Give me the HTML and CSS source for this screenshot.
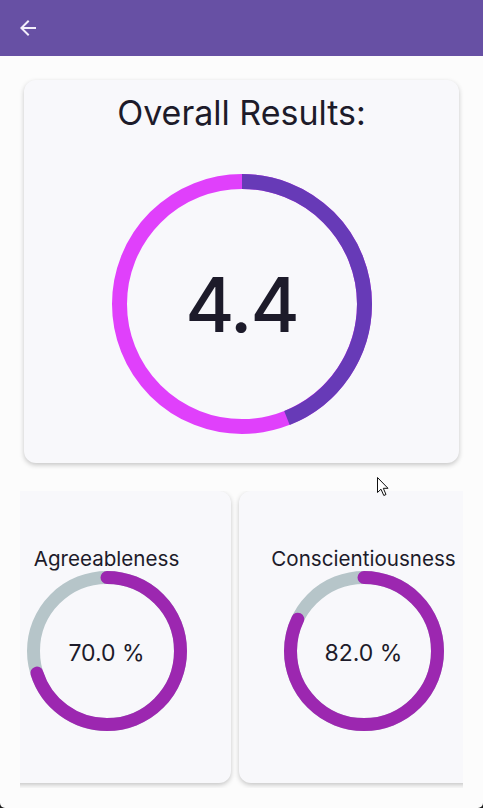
FILE: index.html
```html
<!DOCTYPE html>
<html lang="en">
<head>
<meta charset="utf-8">
<title>Results</title>
<link rel="stylesheet" href="styles.css">
</head>
<body>
<div class="screen">
  <header class="appbar">
    <button class="back" aria-label="Back">
      <svg viewBox="0 0 24 24" width="24" height="24"><path d="M20 11H7.83l5.59-5.59L12 4l-8 8 8 8 1.41-1.41L7.83 13H20v-2z" fill="#f3eefb"/></svg>
    </button>
  </header>
  <main class="content">
    <section class="overall card">
      <h1 class="overall-title">Overall Results:</h1>
      <div class="big-ring">
        <svg viewBox="0 0 260 260" width="260" height="260">
          <circle cx="130" cy="130" r="122.5" fill="none" stroke="#e040fb" stroke-width="15"/>
          <circle cx="130" cy="130" r="122.5" fill="none" stroke="#673ab7" stroke-width="15" stroke-dasharray="338.7 1000" transform="rotate(-90 130 130)"/>
        </svg>
        <span class="big-value">4.4</span>
      </div>
    </section>
    <div class="traits">
      <div class="traits-track">
        <article class="trait card">
          <h2 class="trait-name">Agreeableness</h2>
          <div class="small-ring">
            <svg viewBox="0 0 160 160" width="160" height="160">
              <circle cx="80" cy="80" r="73.5" fill="none" stroke="#b6c5c9" stroke-width="13"/>
              <circle cx="80" cy="80" r="73.5" fill="none" stroke="#9c27b0" stroke-width="13" stroke-linecap="round" stroke-dasharray="323.3 1000" transform="rotate(-90 80 80)"/>
            </svg>
            <span class="small-value">70.0 %</span>
          </div>
        </article>
        <article class="trait card">
          <h2 class="trait-name">Conscientiousness</h2>
          <div class="small-ring">
            <svg viewBox="0 0 160 160" width="160" height="160">
              <circle cx="80" cy="80" r="73.5" fill="none" stroke="#b6c5c9" stroke-width="13"/>
              <circle cx="80" cy="80" r="73.5" fill="none" stroke="#9c27b0" stroke-width="13" stroke-linecap="round" stroke-dasharray="378.7 1000" transform="rotate(-90 80 80)"/>
            </svg>
            <span class="small-value">82.0 %</span>
          </div>
        </article>
      </div>
    </div>
  </main>
  <svg class="cursor" viewBox="0 0 13 20" width="13" height="20"><path d="M0.5 0.5 L0.5 15.5 L4 12.2 L6.8 18.5 L9 17.5 L6.3 11.3 L11 11.3 Z" fill="#fff" stroke="#111" stroke-width="1"/></svg>
</div>
</body>
</html>
```

FILE: styles.css
```css
* { box-sizing: border-box; }

html {
  background: #1a1a1a;
}

body {
  margin: 0;
  width: 483px;
  height: 808px;
  overflow: hidden;
  font-family: Inter, "Noto Sans", sans-serif;
  color: #1d1b2a;
}

.screen {
  position: relative;
  width: 483px;
  height: 808px;
  background: #fcfcfc;
  border-radius: 0 0 5px 5px;
  overflow: hidden;
}

.appbar {
  height: 56px;
  background: #6750a4;
  display: flex;
  align-items: center;
  padding-left: 16px;
}

.back {
  width: 24px;
  height: 24px;
  padding: 0;
  border: 0;
  background: none;
  display: block;
}

.back svg { display: block; }

.content {
  padding-top: 24px;
}

.card {
  background: #f8f8fb;
  border-radius: 12px;
  box-shadow: 0 2px 5px rgba(0, 0, 0, 0.22);
}

.overall {
  margin: 0 24px;
  height: 383px;
  padding-top: 12.5px;
  display: flex;
  flex-direction: column;
  align-items: center;
}

.overall-title {
  margin: 0;
  font-size: 34px;
  line-height: 40px;
  font-weight: 400;
}

.big-ring {
  margin-top: 41.5px;
  width: 260px;
  height: 260px;
  position: relative;
  display: flex;
  align-items: center;
  justify-content: center;
}

.big-ring svg,
.small-ring svg {
  position: absolute;
  inset: 0;
}

.big-value {
  position: relative;
  font-size: 75px;
  font-weight: 500;
  letter-spacing: -2px;
}

.traits {
  margin: 28px 20px 0;
  height: 297px;
  overflow: hidden;
}

.traits-track {
  display: flex;
  gap: 8px;
  margin-left: -38px;
}

.trait {
  flex: 0 0 249px;
  height: 292px;
  padding-top: 56px;
  display: flex;
  flex-direction: column;
  align-items: center;
  border-radius: 12px;
}

.trait-name {
  margin: 0;
  font-size: 20.6px;
  line-height: 24px;
  font-weight: 400;
  white-space: nowrap;
}

.small-ring {
  width: 160px;
  height: 160px;
  position: relative;
  display: flex;
  align-items: center;
  justify-content: center;
}

.small-value {
  position: relative;
  margin-top: 3px;
  font-size: 23px;
}

.cursor {
  position: absolute;
  left: 377px;
  top: 477px;
}
```
